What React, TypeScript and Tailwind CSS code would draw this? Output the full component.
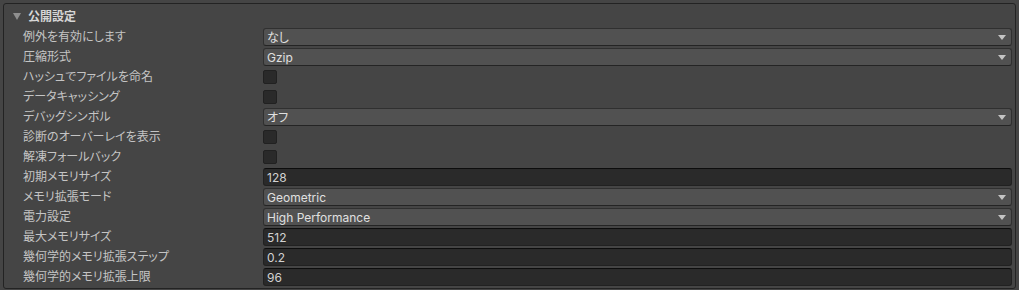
import React from "react";

type Row =
  | { label: string; kind: "dropdown"; value: string }
  | { label: string; kind: "check" }
  | { label: string; kind: "field"; value: string };

const rows: Row[] = [
  { label: "例外を有効にします", kind: "dropdown", value: "なし" },
  { label: "圧縮形式", kind: "dropdown", value: "Gzip" },
  { label: "ハッシュでファイルを命名", kind: "check" },
  { label: "データキャッシング", kind: "check" },
  { label: "デバッグシンボル", kind: "dropdown", value: "オフ" },
  { label: "診断のオーバーレイを表示", kind: "check" },
  { label: "解凍フォールバック", kind: "check" },
  { label: "初期メモリサイズ", kind: "field", value: "128" },
  { label: "メモリ拡張モード", kind: "dropdown", value: "Geometric" },
  { label: "電力設定", kind: "dropdown", value: "High Performance" },
  { label: "最大メモリサイズ", kind: "field", value: "512" },
  { label: "幾何学的メモリ拡張ステップ", kind: "field", value: "0.2" },
  { label: "幾何学的メモリ拡張上限", kind: "field", value: "96" },
];

function Arrow() {
  return (
    <svg width="8" height="5" viewBox="0 0 8 5" className="shrink-0">
      <path d="M0 0 H8 L4 5 Z" fill="#c4c4c4" />
    </svg>
  );
}

function Control({ row }: { row: Row }) {
  if (row.kind === "dropdown") {
    return (
      <div className="mt-[2px] h-[18px] flex-1 flex items-center justify-between rounded-[3px] border border-[#303030] border-b-[#242424] bg-[#515151] pl-[3px] pr-[5px] text-[12px] text-[#e0e0e0]">
        <span className="leading-none pt-[1px]">{row.value}</span>
        <Arrow />
      </div>
    );
  }
  if (row.kind === "check") {
    return (
      <div className="mt-[4px] h-[14px] w-[14px] rounded-[2px] border border-[#212121] bg-[#2a2a2a]" />
    );
  }
  return (
    <div className="mt-[2px] h-[18px] flex-1 flex items-center rounded-[3px] border border-[#212121] border-t-[#0d0d0d] bg-[#2a2a2a] pl-[3px] text-[12px] text-[#d2d2d2]">
      <span className="leading-none pt-[1px]">{row.value}</span>
    </div>
  );
}

export default function App() {
  return (
    <div className="w-[1019px] h-[290px] bg-[#454545] p-[3px] pb-[1px] font-['Inter','Noto_Sans_CJK_JP',sans-serif] [font-feature-settings:'palt']">
      <div className="h-full rounded-[3px] border border-[#232323] bg-[#454545] pt-[2px] pr-[3px]">
        <div className="h-[20px] flex items-center pl-[9px]">
          <svg width="8" height="7" viewBox="0 0 8 7" className="mr-[7px]">
            <path d="M0 0 H8 L4 7 Z" fill="#8f8f8f" />
          </svg>
          <span className="text-[12px] font-bold text-[#d6d6d6] leading-none pt-[1px]">公開設定</span>
        </div>
        {rows.map((r) => (
          <div key={r.label} className="h-[20px] flex items-start">
            <div className="w-[259px] shrink-0 pl-[19px] pt-[2px] h-[20px] flex items-center text-[12px] text-[#c4c4c4] leading-none">
              {r.label}
            </div>
            <Control row={r} />
          </div>
        ))}
      </div>
    </div>
  );
}
